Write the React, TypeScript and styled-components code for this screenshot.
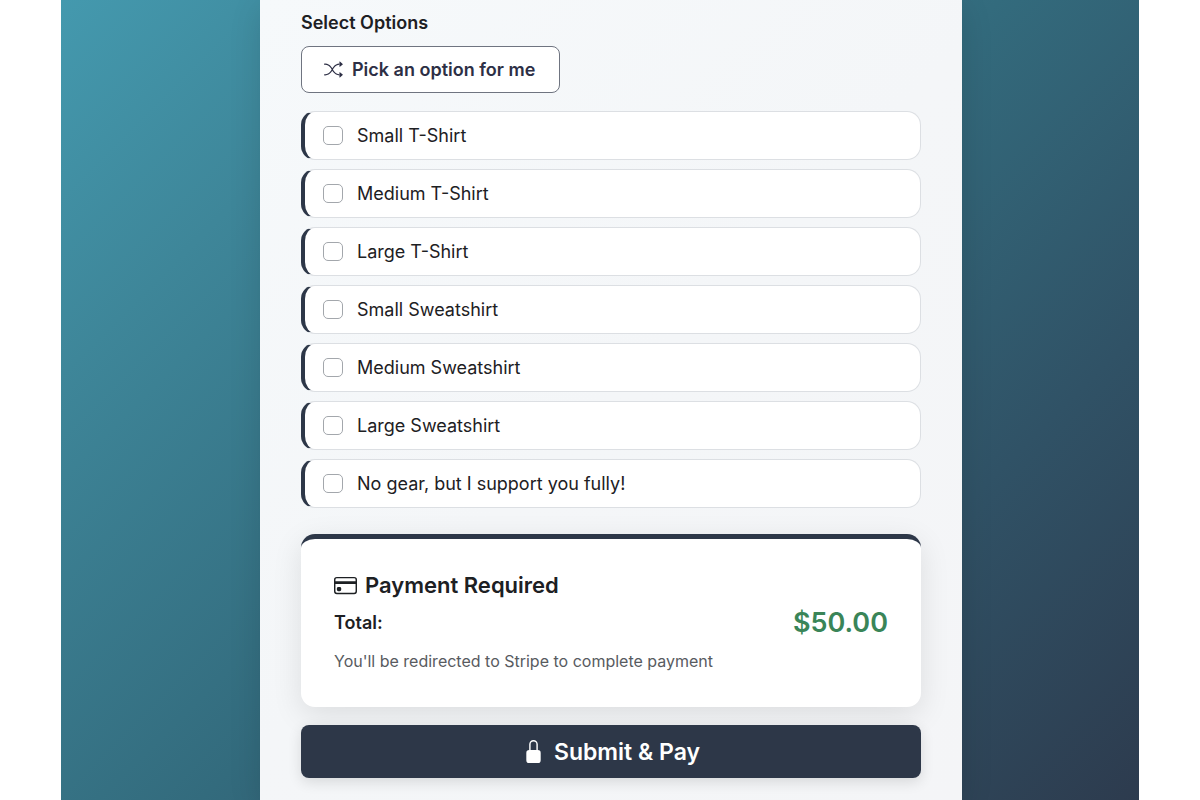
import React from 'react';
import styled, { createGlobalStyle } from 'styled-components';
import { BsCreditCard, BsLockFill, BsShuffle } from 'react-icons/bs';

const GlobalStyle = createGlobalStyle`
  *, *::before, *::after { box-sizing: border-box; }
  body {
    margin: 0;
    background: #ffffff;
    color: #1d2023;
    font-family: Inter, "Liberation Sans", sans-serif;
    font-size: 18px;
    line-height: 24px;
  }
`;

const Page = styled.div`
  min-height: 100vh;
  display: flex;
  padding: 0 61px;
`;

const Backdrop = styled.main`
  flex: 1;
  display: flex;
  padding: 0 177px 0 199px;
  background: linear-gradient(
    135deg,
    #4499ae 0%,
    #3e8699 20%,
    #336b7d 50%,
    #305266 75%,
    #2d3b4e 100%
  );
`;

const FormPanel = styled.form`
  flex: 1;
  min-width: 0;
  padding: 11px 41px 22px;
  background: linear-gradient(135deg, #f6f9fb 0%, #f4f6f8 50%, #f4f5f7 100%);
  box-shadow: 0 8px 30px rgba(0, 0, 0, 0.12);
`;

const OptionGroup = styled.fieldset`
  margin: 0 0 26px;
  padding: 0;
  border: 0;
  min-width: 0;
`;

const GroupTitle = styled.legend`
  padding: 0;
  margin-bottom: 11px;
  font-weight: 600;
`;

const PickButton = styled.button`
  display: inline-flex;
  align-items: center;
  gap: 9px;
  height: 47px;
  padding: 0 24px 0 22px;
  border: 1px solid #6f7480;
  border-radius: 8px;
  background: #ffffff;
  color: #2d2f45;
  font: inherit;
  font-weight: 600;
  cursor: pointer;
`;

const OptionList = styled.div`
  display: flex;
  flex-direction: column;
  gap: 9px;
  margin-top: 18px;
`;

const OptionRow = styled.label`
  display: flex;
  align-items: center;
  gap: 14px;
  height: 49px;
  padding: 0 18px;
  border: 1px solid #dcdfe3;
  border-left: 4px solid #2d3748;
  border-radius: 14px;
  background: #ffffff;
  cursor: pointer;
`;

const Tick = styled.input`
  appearance: none;
  flex: none;
  width: 20px;
  height: 19px;
  margin: 0;
  border: 1px solid #a3a7ac;
  border-radius: 5px;
  background: #ffffff;

  &:checked {
    background: #2d3748;
    border-color: #2d3748;
  }
`;

const PaymentCard = styled.section`
  padding: 32px 33px 34px;
  border-top: 5px solid #2d3748;
  border-radius: 14px;
  background: #ffffff;
  box-shadow: 0 8px 30px rgba(0, 0, 0, 0.1);
`;

const PaymentTitle = styled.h2`
  display: flex;
  align-items: center;
  gap: 8px;
  margin: 0;
  font-size: 22px;
  line-height: 28px;
  font-weight: 600;
`;

const TotalRow = styled.div`
  display: flex;
  align-items: center;
  justify-content: space-between;
  margin-top: 4px;
  line-height: 40px;
  font-weight: 600;
`;

const Amount = styled.span`
  font-size: 27px;
  color: #3a8558;
`;

const Note = styled.p`
  margin: 6px 0 0;
  font-size: 16px;
  color: #585b5f;
`;

const SubmitButton = styled.button`
  display: flex;
  align-items: center;
  justify-content: center;
  gap: 9px;
  width: 100%;
  height: 53px;
  margin-top: 18px;
  border: 0;
  border-radius: 8px;
  background: #2d3748;
  color: #ffffff;
  font: inherit;
  font-size: 23px;
  font-weight: 600;
  box-shadow: 0 4px 14px rgba(0, 0, 0, 0.12);
  cursor: pointer;
`;

const options = [
  'Small T-Shirt',
  'Medium T-Shirt',
  'Large T-Shirt',
  'Small Sweatshirt',
  'Medium Sweatshirt',
  'Large Sweatshirt',
  'No gear, but I support you fully!',
];

export default function App() {
  return (
    <>
      <GlobalStyle />
      <Page>
        <Backdrop>
          <FormPanel onSubmit={(event) => event.preventDefault()}>
            <OptionGroup>
              <GroupTitle>Select Options</GroupTitle>
              <PickButton type="button">
                <BsShuffle size={19} aria-hidden />
                Pick an option for me
              </PickButton>
              <OptionList>
                {options.map((option) => (
                  <OptionRow key={option}>
                    <Tick type="checkbox" name="options" value={option} />
                    {option}
                  </OptionRow>
                ))}
              </OptionList>
            </OptionGroup>
            <PaymentCard>
              <PaymentTitle>
                <BsCreditCard size={23} aria-hidden />
                Payment Required
              </PaymentTitle>
              <TotalRow>
                <span>Total:</span>
                <Amount>$50.00</Amount>
              </TotalRow>
              <Note>You'll be redirected to Stripe to complete payment</Note>
            </PaymentCard>
            <SubmitButton type="submit">
              <BsLockFill size={23} aria-hidden />
              Submit &amp; Pay
            </SubmitButton>
          </FormPanel>
        </Backdrop>
      </Page>
    </>
  );
}
